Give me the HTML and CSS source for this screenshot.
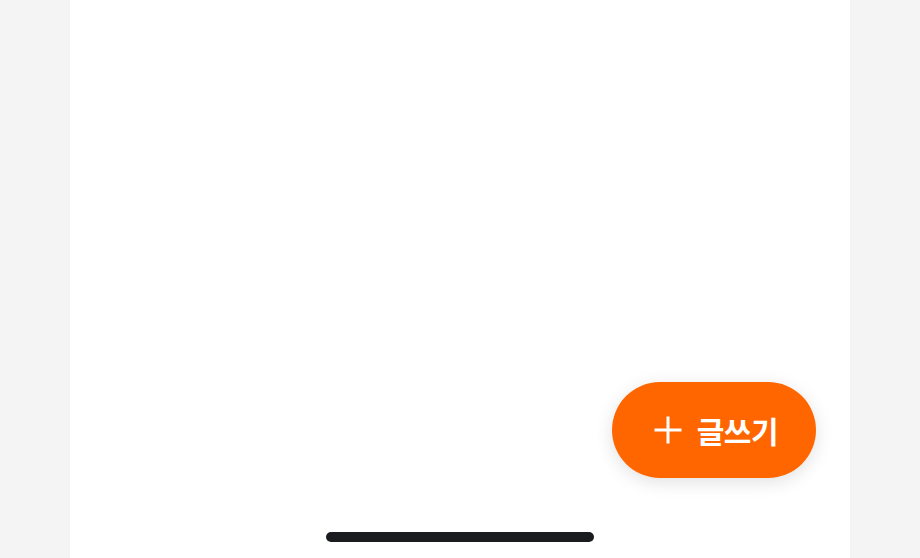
FILE: index.html
```html
<!DOCTYPE html>
<html lang="ko">
<head>
  <meta charset="UTF-8" />
  <meta name="viewport" content="width=device-width, initial-scale=1.0" />
  <title>글쓰기</title>
  <link rel="stylesheet" href="styles.css">
</head>
<body>
  <div class="screen">
    <div class="content"></div>
    <div class="fab-row">
      <button class="write-button">
        <svg class="plus-icon" width="30" height="30" viewBox="0 0 30 30" aria-hidden="true">
          <path d="M15 1.5v27M1.5 15h27" stroke="#fff" stroke-width="3" stroke-linecap="butt" fill="none" />
        </svg>
        <span>글쓰기</span>
      </button>
    </div>
    <div class="home-area">
      <div class="home-indicator"></div>
    </div>
  </div>
</body>
</html>
```

FILE: styles.css
```css
html, body {
  height: 100%;
}
body {
  margin: 0;
  background-color: #f4f4f4;
  font-family: "Noto Sans CJK KR", "Noto Sans", sans-serif;
  overflow: hidden;
}
.screen {
  width: 780px;
  height: 100vh;
  margin: 0 auto;
  background: #fff;
  display: flex;
  flex-direction: column;
}
.content {
  flex: 1;
}
.fab-row {
  display: flex;
  justify-content: flex-end;
  padding-right: 34px;
}
.write-button {
  display: flex;
  align-items: center;
  gap: 14px;
  height: 96px;
  padding: 0 38px 0 41px;
  border: none;
  border-radius: 48px;
  background-color: #ff6600;
  color: #fff;
  font-family: inherit;
  font-size: 30px;
  font-weight: 700;
  letter-spacing: -0.5px;
  box-shadow: 0 4px 18px rgba(0, 0, 0, 0.12);
  cursor: pointer;
}
.plus-icon {
  display: block;
  flex-shrink: 0;
}
.home-area {
  display: flex;
  justify-content: center;
  padding: 54px 0 16px;
}
.home-indicator {
  width: 268px;
  height: 10px;
  border-radius: 5px;
  background-color: #1b1c1f;
}
```
